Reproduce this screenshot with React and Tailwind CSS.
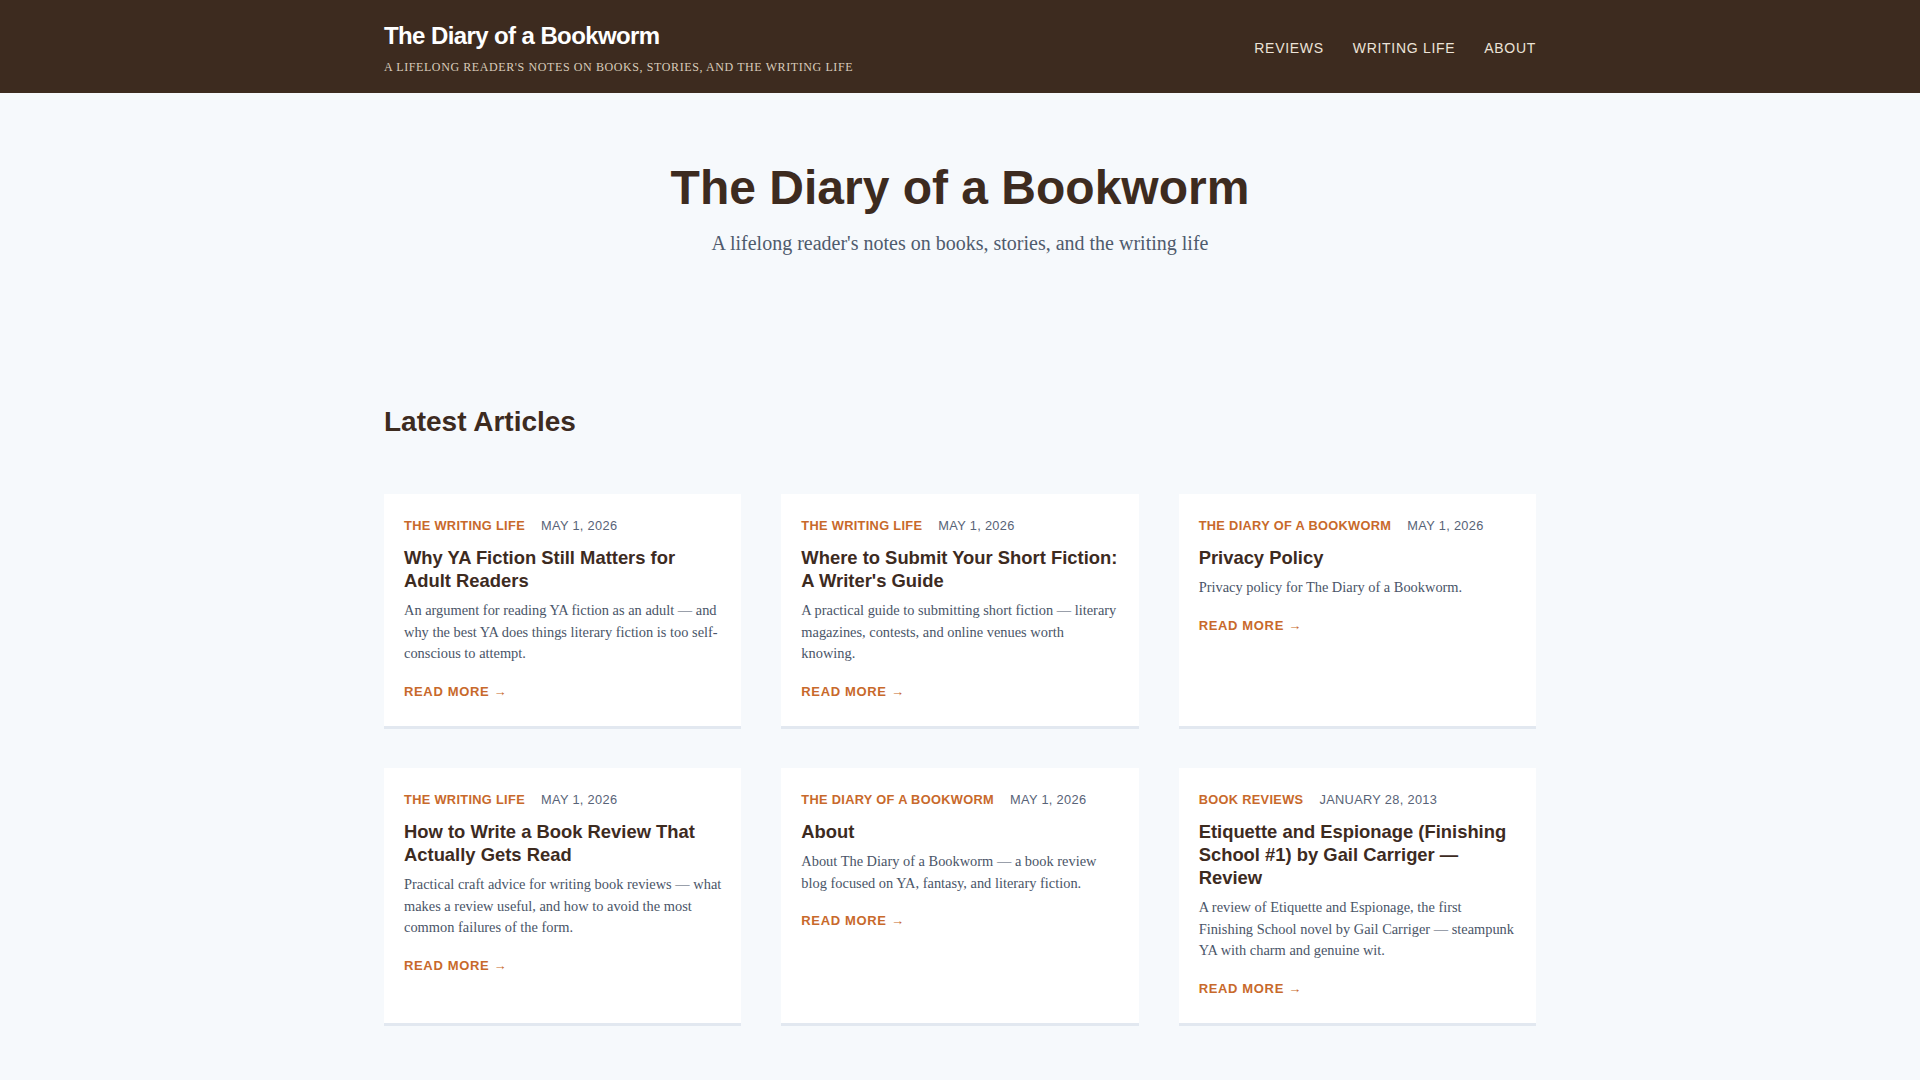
import React from "react";

const articles = [
    {
        category: "The Writing Life",
        date: "May 1, 2026",
        title: "Why YA Fiction Still Matters for Adult Readers",
        excerpt:
            "An argument for reading YA fiction as an adult — and why the best YA does things literary fiction is too self-conscious to attempt.",
    },
    {
        category: "The Writing Life",
        date: "May 1, 2026",
        title: "Where to Submit Your Short Fiction: A Writer's Guide",
        excerpt:
            "A practical guide to submitting short fiction — literary magazines, contests, and online venues worth knowing.",
    },
    {
        category: "The Diary of a Bookworm",
        date: "May 1, 2026",
        title: "Privacy Policy",
        excerpt: "Privacy policy for The Diary of a Bookworm.",
    },
    {
        category: "The Writing Life",
        date: "May 1, 2026",
        title: "How to Write a Book Review That Actually Gets Read",
        excerpt:
            "Practical craft advice for writing book reviews — what makes a review useful, and how to avoid the most common failures of the form.",
    },
    {
        category: "The Diary of a Bookworm",
        date: "May 1, 2026",
        title: "About",
        excerpt:
            "About The Diary of a Bookworm — a book review blog focused on YA, fantasy, and literary fiction.",
    },
    {
        category: "Book Reviews",
        date: "January 28, 2013",
        title: "Etiquette and Espionage (Finishing School #1) by Gail Carriger — Review",
        excerpt:
            "A review of Etiquette and Espionage, the first Finishing School novel by Gail Carriger — steampunk YA with charm and genuine wit.",
    },
];

const sans = "font-['Liberation_Sans',Arial,sans-serif]";
const serif = "font-['Liberation_Serif','Times_New_Roman',serif]";

const ArticleCard = ({ article }) => (
    <article className="bg-white px-5 pt-5 pb-6 border-b-[3px] border-[#e2e8f0]">
        <div className={`flex items-center gap-4 uppercase text-[0.8rem] leading-6 tracking-wide ${sans}`}>
            <span className="font-bold text-[#c8692b]">{article.category}</span>
            <span className="text-[#586377]">{article.date}</span>
        </div>
        <h3 className={`mt-2 text-[1.15rem] leading-[1.25] font-bold text-[#3d2b1f] ${sans}`}>{article.title}</h3>
        <p className={`mt-2 text-[0.9rem] leading-normal text-[#4a5568] ${serif}`}>{article.excerpt}</p>
        <a href="#" className={`mt-[17px] block text-[13px] leading-5 font-bold uppercase tracking-wider text-[#c8692b] ${sans}`}>
            Read more →
        </a>
    </article>
);

export default function App() {
    return (
        <div className="min-h-screen bg-[#f6f9fc]">
            <header className="bg-[#3d2b1f]">
                <div className="max-w-6xl mx-auto pt-5 pb-[18px] flex items-center justify-between">
                    <div>
                        <a href="#" className={`block text-2xl leading-8 font-bold tracking-tight text-white ${sans}`}>
                            The Diary of a Bookworm
                        </a>
                        <p className={`mt-[7px] text-xs leading-4 uppercase tracking-wider text-[#d9cbbb] ${serif}`}>
                            A lifelong reader's notes on books, stories, and the writing life
                        </p>
                    </div>
                    <nav className={`flex items-center gap-[29px] text-sm uppercase tracking-wider text-[#ece3d8] ${sans}`}>
                        <a href="#">Reviews</a>
                        <a href="#">Writing Life</a>
                        <a href="#">About</a>
                    </nav>
                </div>
            </header>

            <main className="max-w-6xl mx-auto">
                <section className="pt-[66px] pb-16 text-center">
                    <h1 className={`text-5xl leading-[1.2] font-bold text-[#3d2b1f] ${sans}`}>The Diary of a Bookworm</h1>
                    <p className={`mt-3 text-xl leading-7 text-[#4f5b6d] ${serif}`}>
                        A lifelong reader's notes on books, stories, and the writing life
                    </p>
                </section>

                <section className="pt-[84px] pb-16">
                    <h2 className={`text-[28px] leading-[1.2] font-bold text-[#3d2b1f] ${sans}`}>Latest Articles</h2>
                    <div className="mt-14 grid grid-cols-3 gap-x-10 gap-y-[39px] items-stretch">
                        {articles.map((a, i) => (
                            <ArticleCard key={i} article={a} />
                        ))}
                    </div>
                </section>
            </main>
        </div>
    );
}
